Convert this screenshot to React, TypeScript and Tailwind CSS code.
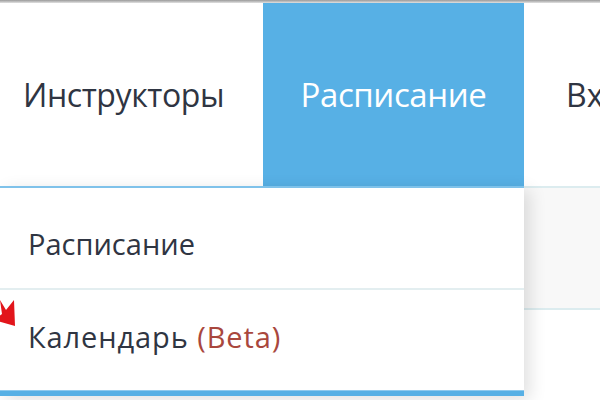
import React from 'react';

const font = { fontFamily: '"Open Sans", "Noto Sans", sans-serif' };

export default function App() {
  return (
    <div className="relative w-[600px] h-[400px] overflow-hidden bg-white" style={font}>
      {/* top strip */}
      <div className="h-[3px] bg-gradient-to-b from-[#9a9a9a] to-[#e2e2e2]" />

      {/* nav bar */}
      <nav className="flex h-[183px] items-stretch">
        <div className="w-[263px] shrink-0 flex items-center pl-[23px] text-[32px] text-[#2f3542] tracking-[-0.4px]">
          Инструкторы
        </div>
        <div className="w-[261px] shrink-0 flex items-center justify-center bg-[#57b0e5] text-[33px] text-white tracking-[-0.4px]">
          Расписание
        </div>
        <div className="flex-1 flex items-center pl-[42px] text-[32px] text-[#2f3542] whitespace-nowrap">
          Вход
        </div>
      </nav>

      {/* page body under the nav */}
      <div className="border-t-2 border-[#dcecef]">
        <div className="h-[122px] bg-[#f8f8f8] border-b-2 border-[#dcecef]" />
        <div className="h-[90px] bg-white" />
      </div>

      {/* dropdown */}
      <div className="absolute left-0 top-[186px] w-[524px] bg-white border-t-2 border-[#7fc2ea] shadow-[6px_4px_16px_rgba(0,0,0,0.12)]">
        <div className="h-[102px] flex items-center pl-[28px] pt-[12px] text-[29px] text-[#2f3542] border-b-2 border-[#e3eef0]">
          Расписание
        </div>
        <div className="h-[100px] flex items-center pl-[28px] pb-[6px] text-[29px] text-[#2f3542] tracking-[0.9px]">
          Календарь&nbsp;<span className="text-[#a9473d]">(Beta)</span>
        </div>
        <div className="h-[6px] bg-[#57b0e5] border-t border-[#8fcaee]" />
      </div>

      {/* red pointer arrow */}
      <svg className="absolute left-0 top-[296px]" width="18" height="32" viewBox="0 0 18 32">
        <polygon points="0,4 6,14 14,4 15,30 -6,24 2,18" fill="#e2151b" />
      </svg>
    </div>
  );
}
